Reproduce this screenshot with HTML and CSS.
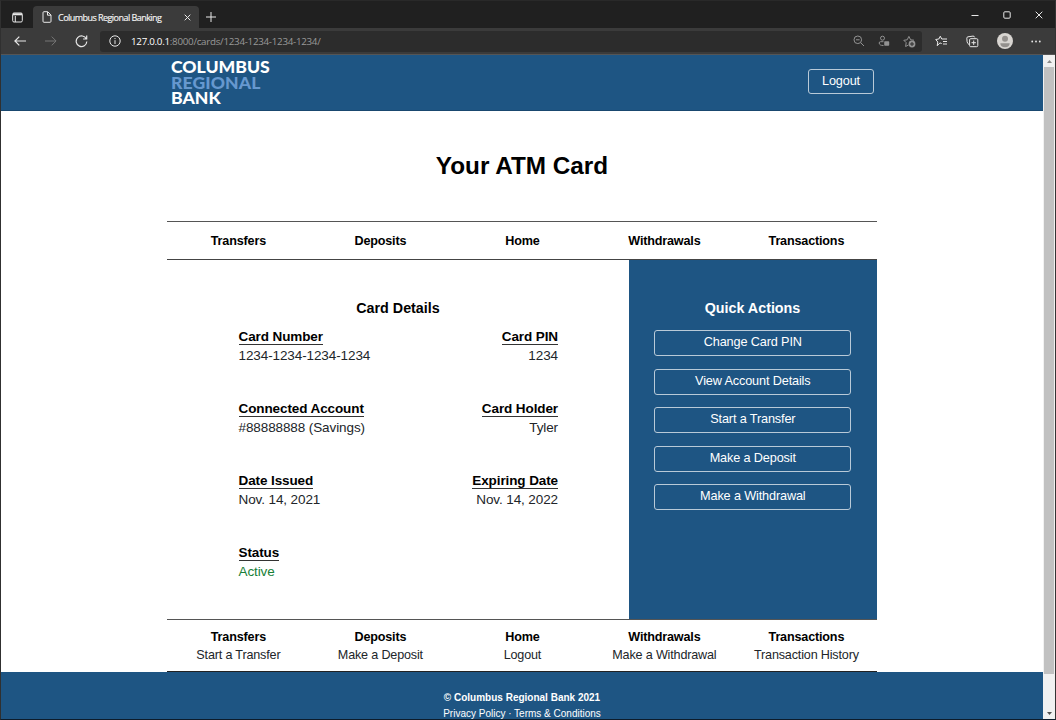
FILE: index.html
```
<!DOCTYPE html>
<html lang="en">
<head>
<meta charset="utf-8">
<title>Columbus Regional Banking</title>
<link rel="stylesheet" href="styles.css">
</head>
<body>
<div class="window">
  <div class="tabstrip">
    <svg class="tab-menu" width="11" height="11" viewBox="0 0 11 11"><rect x=".7" y="1" width="9.600" height="9" rx="1.300"/><path d="M1 2.300h9" stroke-width="2"/><path d="M3.300 4v6"/></svg>
    <div class="tab">
      <svg class="page-icon" width="10" height="12" viewBox="0 0 10 12"><path d="M1 1.700Q1 .7 2 .7H5.700L9 4V10.300Q9 11.300 8 11.300H2Q1 11.300 1 10.300ZM5.500.9V4.200H9"/></svg>
      <span class="tab-title">Columbus Regional Banking</span>
      <svg class="tab-close" width="7" height="7" viewBox="0 0 7 7"><path d="M.7.7l5.600 5.600M6.300.7L.7 6.300"/></svg>
    </div>
    <svg class="new-tab" width="10" height="10" viewBox="0 0 10 10"><path d="M5 0v10M0 5h10"/></svg>
    <div class="controls">
      <svg width="8" height="8" viewBox="0 0 8 8"><path d="M.5 4.500h7"/></svg>
      <svg width="8" height="8" viewBox="0 0 8 8"><rect x=".8" y=".8" width="6.400" height="6.400" rx="1"/></svg>
      <svg width="8" height="8" viewBox="0 0 8 8"><path d="M.7.7l6.600 6.600M7.300.7L.7 7.300"/></svg>
    </div>
  </div>
  <div class="toolbar">
    <svg class="back" width="12" height="10" viewBox="0 0 12 10"><path d="M12 5H1M5.300.6L.9 5l4.400 4.400"/></svg>
    <svg class="forward" width="12" height="10" viewBox="0 0 12 10"><path d="M0 5h11M6.700.6L11.100 5 6.700 9.400"/></svg>
    <svg class="reload" width="13" height="13" viewBox="0 0 13 13"><path d="M11.300 4A5.300 5.300 0 1 0 11.800 6.500M8.100 4H11.700V.6"/></svg>
    <div class="address">
      <svg width="12" height="12" viewBox="0 0 12 12"><circle cx="6" cy="6" r="5.200"/><path d="M6 5.200V9M6 3v1.100"/></svg>
      <span class="url"><b>127.0.0.1</b>:8000/cards/1234-1234-1234-1234/</span>
      <div class="address-icons">
        <svg width="12" height="12" viewBox="0 0 12 12"><circle cx="4.800" cy="4.800" r="3.800"/><path d="M7.700 7.700L11 11M3 4.800h3.600"/></svg>
        <svg width="12" height="12" viewBox="0 0 12 12"><circle cx="4.500" cy="3.200" r="2"/><path d="M5.500 6.700H2.500Q1.200 6.700 1.200 8 1.200 10.500 5.500 10.500"/><rect class="solid" x="6.200" y="6.200" width="5" height="4.600" rx=".7"/></svg>
        <svg width="13" height="13" viewBox="0 0 13 13"><path d="M5.500 10L2.600 11.500 3.200 7.700.8 5.300 4.200 4.800 5.900 1.400 7.600 4.800 11 5.200"/><circle class="solid" cx="9" cy="9" r="3.400"/><path class="cut" d="M9 7v4M7 9h4"/></svg>
      </div>
    </div>
    <div class="actions">
      <svg width="13" height="12" viewBox="0 0 13 12"><path d="M6.700 8.600L5 7.900 2.200 10.700 2.800 7 .7 4.500 3.800 4 5.300 1.200 6.700 4H12M8 6.500h4M8 9h4"/></svg>
      <svg width="13" height="13" viewBox="0 0 13 13"><path d="M3 9.500Q1.500 8.700 1.100 6.800L.8 3.200Q.8 2 2 1.800L7 1.100Q8.400 1 8.700 2.400M3.600 4.800Q3.600 3.700 4.700 3.700H10.700Q11.800 3.700 11.800 4.800V10.600Q11.800 11.700 10.700 11.700H4.700Q3.600 11.700 3.600 10.600ZM7.700 5.500v4.400M5.500 7.700h4.400"/></svg>
      <svg class="avatar" width="16" height="16" viewBox="0 0 16 16"><circle class="disc" cx="8" cy="8" r="8"/><circle class="head" cx="8" cy="5.800" r="3"/><path class="head" d="M3.300 10.200H12.700Q12.500 14.200 8 14.300 3.500 14.200 3.300 10.200Z"/></svg>
      <svg class="more" width="10" height="3" viewBox="0 0 10 3"><circle cx="1.200" cy="1.500" r=".9"/><circle cx="5" cy="1.500" r=".9"/><circle cx="8.800" cy="1.500" r=".9"/></svg>
    </div>
  </div>
  <div class="viewport">
    <div class="page">
      <header class="site-header">
        <div class="logo"><span>COLUMBUS</span><span class="light">REGIONAL</span><span>BANK</span></div>
        <a class="button logout">Logout</a>
      </header>
      <main class="content">
        <h1>Your ATM Card</h1>
        <nav class="nav"><a>Transfers</a><a>Deposits</a><a>Home</a><a>Withdrawals</a><a>Transactions</a></nav>
        <div class="panels">
          <section class="details">
            <h2>Card Details</h2>
            <div class="grid">
              <div><h3>Card Number</h3><p>1234-1234-1234-1234</p></div>
              <div class="end"><h3>Card PIN</h3><p>1234</p></div>
              <div><h3>Connected Account</h3><p>#88888888 (Savings)</p></div>
              <div class="end"><h3>Card Holder</h3><p>Tyler</p></div>
              <div><h3>Date Issued</h3><p>Nov. 14, 2021</p></div>
              <div class="end"><h3>Expiring Date</h3><p>Nov. 14, 2022</p></div>
              <div><h3>Status</h3><p class="active">Active</p></div>
            </div>
          </section>
          <aside class="quick">
            <h2>Quick Actions</h2>
            <a class="button">Change Card PIN</a>
            <a class="button">View Account Details</a>
            <a class="button">Start a Transfer</a>
            <a class="button">Make a Deposit</a>
            <a class="button">Make a Withdrawal</a>
          </aside>
        </div>
        <div class="links">
          <div><b>Transfers</b><a>Start a Transfer</a></div>
          <div><b>Deposits</b><a>Make a Deposit</a></div>
          <div><b>Home</b><a>Logout</a></div>
          <div><b>Withdrawals</b><a>Make a Withdrawal</a></div>
          <div><b>Transactions</b><a>Transaction History</a></div>
        </div>
      </main>
      <footer class="site-footer"><b>© Columbus Regional Bank 2021</b><span>Privacy Policy · Terms &amp; Conditions</span></footer>
    </div>
    <div class="scrollbar">
      <svg width="5" height="3" viewBox="0 0 5 3"><path fill="#8a8a8a" d="M0 3L2.500 0 5 3z"/></svg>
      <div class="thumb"></div>
      <svg width="5" height="3" viewBox="0 0 5 3"><path fill="#505050" d="M0 0L2.500 3 5 0z"/></svg>
    </div>
  </div>
</div>
</body>
</html>
```
FILE: styles.css
```
* { box-sizing: border-box; }
body { margin: 0; overflow: hidden; font-family: "Liberation Sans", Arial, sans-serif; }
h1, h2, h3, p { margin: 0; }
svg { display: block; flex: none; fill: none; stroke: currentColor; stroke-width: 1; }
.window { width: 1056px; height: 720px; display: flex; flex-direction: column; background: #202020; color: #e8e8e8; border: 1px solid #303030; border-top-color: #292929; border-bottom-color: #0d1c2b; border-right-color: #343434; overflow: hidden; }

.tabstrip { height: 27px; flex: none; display: flex; align-items: center; padding-left: 11px; font-family: "Open Sans", "Noto Sans", sans-serif; }
.tab-menu { margin-top: 6px; }
.tab { align-self: flex-end; width: 166px; height: 22px; margin-left: 10px; padding: 0 8px 0 9px; display: flex; align-items: center; background: #3b3b3b; border-radius: 4px 4px 0 0; }
.tab-title { margin-left: 6px; font-size: 9px; letter-spacing: -0.54px; white-space: nowrap; color: #f4f4f4; -webkit-text-stroke: 0.15px #f4f4f4; }
.tab-close { margin-left: auto; }
.new-tab { margin: 5px 0 0 7px; }
.controls { margin: 1px 12px 0 auto; display: flex; gap: 24px; }

.toolbar { height: 27px; flex: none; display: flex; align-items: center; padding: 0 14px 0 13px; background: #3b3b3b; border-bottom: 1px solid #555; }
.forward { margin-left: 19px; color: #777; }
.reload { margin-left: 18px; }
.back, .reload { stroke-width: 1.2; }
.address { width: 822px; height: 21px; margin-left: 12px; padding: 0 6px 0 9px; display: flex; align-items: center; background: #2c2c2c; border-radius: 3px; }
.url { margin-left: 10px; font: 9.8px "Open Sans", "Noto Sans", sans-serif; color: #999; letter-spacing: -0.28px; }
.url b { font-weight: 400; color: #fff; }
.address-icons { margin-left: auto; display: flex; align-items: center; gap: 13px; color: #929292; }
.solid { fill: currentColor; stroke: none; }
.cut { stroke: #2c2c2c; }
.actions { margin-left: auto; display: flex; align-items: center; gap: 18px; }
.avatar { stroke: none; }
.disc { fill: #d8d5d1; }
.head { fill: #93908d; }
.more { fill: currentColor; stroke: none; }

.viewport { flex: 1; min-height: 0; display: flex; background: #fff; }
.page { flex: 1; display: flex; flex-direction: column; color: #000; overflow: hidden; }
.scrollbar { width: 12px; display: flex; flex-direction: column; align-items: center; padding: 5px 1px 4px; background: #f1f1f1; }
.scrollbar svg { stroke: none; }
.thumb { align-self: stretch; height: 607px; margin: 4px 0 auto; background: #c1c1c1; }

.site-header { height: 56px; flex: none; padding: 0 169px 0 170px; display: flex; justify-content: space-between; background: #1e5583; border-bottom: 1px solid #19486f; }
.logo { padding-top: 4px; display: flex; flex-direction: column; font: 900 17.600px/15.500px Lato, sans-serif; color: #fff; }
.logo .light { color: #6698cf; letter-spacing: 0.1px; }
.button { height: 26px; border: 1px solid #b9cad8; border-radius: 3px; text-align: center; font-size: 12.700px; letter-spacing: -0.14px; line-height: 23px; color: #fff; }
.logout { width: 66px; height: 25px; margin-top: 14px; }

.content { width: 710px; margin-left: 166px; flex: none; display: flex; flex-direction: column; }
h1 { height: 110px; padding-top: 41px; font-size: 24.300px; line-height: 28px; text-align: center; }
.nav { height: 39px; display: grid; grid-template-columns: repeat(5, 1fr); align-items: center; text-align: center; border-top: 1px solid #555; border-bottom: 1px solid #444; font-size: 12.600px; letter-spacing: -0.17px; font-weight: 700; text-indent: 0.8px; }
.panels { height: 359px; display: flex; }
.details { width: 462px; padding: 40px 72px 0 71px; }
.details h2 { text-indent: 1px; }
h2 { font-size: 14.300px; line-height: 17px; text-align: center; }
.grid { margin-top: 12px; display: grid; grid-template-columns: 1fr 1fr; grid-auto-rows: 72px; font-size: 13.500px; letter-spacing: -0.1px; }
.grid > div { display: flex; flex-direction: column; align-items: flex-start; }
.grid > .end { align-items: flex-end; }
.grid { margin-right: -1px; padding-left: 0.5px; }
h3 { height: 16px; font-size: 13.500px; line-height: 16px; border-bottom: 1px solid #333; }
.grid p { margin-top: 2px; line-height: 17px; color: #212529; }
.grid .active { color: #198038; }
.quick { flex: 1; padding: 40px 26px 0 25px; display: flex; flex-direction: column; background: #1e5583; color: #fff; }
.quick h2 { margin-bottom: 13px; }
.quick .button { margin-bottom: 12.600px; text-indent: 0.6px; }
.links { height: 53px; padding-top: 8px; display: grid; grid-template-columns: repeat(5, 1fr); border-top: 1px solid #555; border-bottom: 1px solid #222; font-size: 12.600px; letter-spacing: -0.17px; line-height: 18px; text-align: center; text-indent: 0.8px; }
.links > div { display: flex; flex-direction: column; }
.links a { color: #212529; }
.site-footer { flex: 1; padding-top: 18px; display: flex; flex-direction: column; align-items: center; background: #1e5583; color: #fff; font-size: 10px; line-height: 16px; white-space: nowrap; }
```
